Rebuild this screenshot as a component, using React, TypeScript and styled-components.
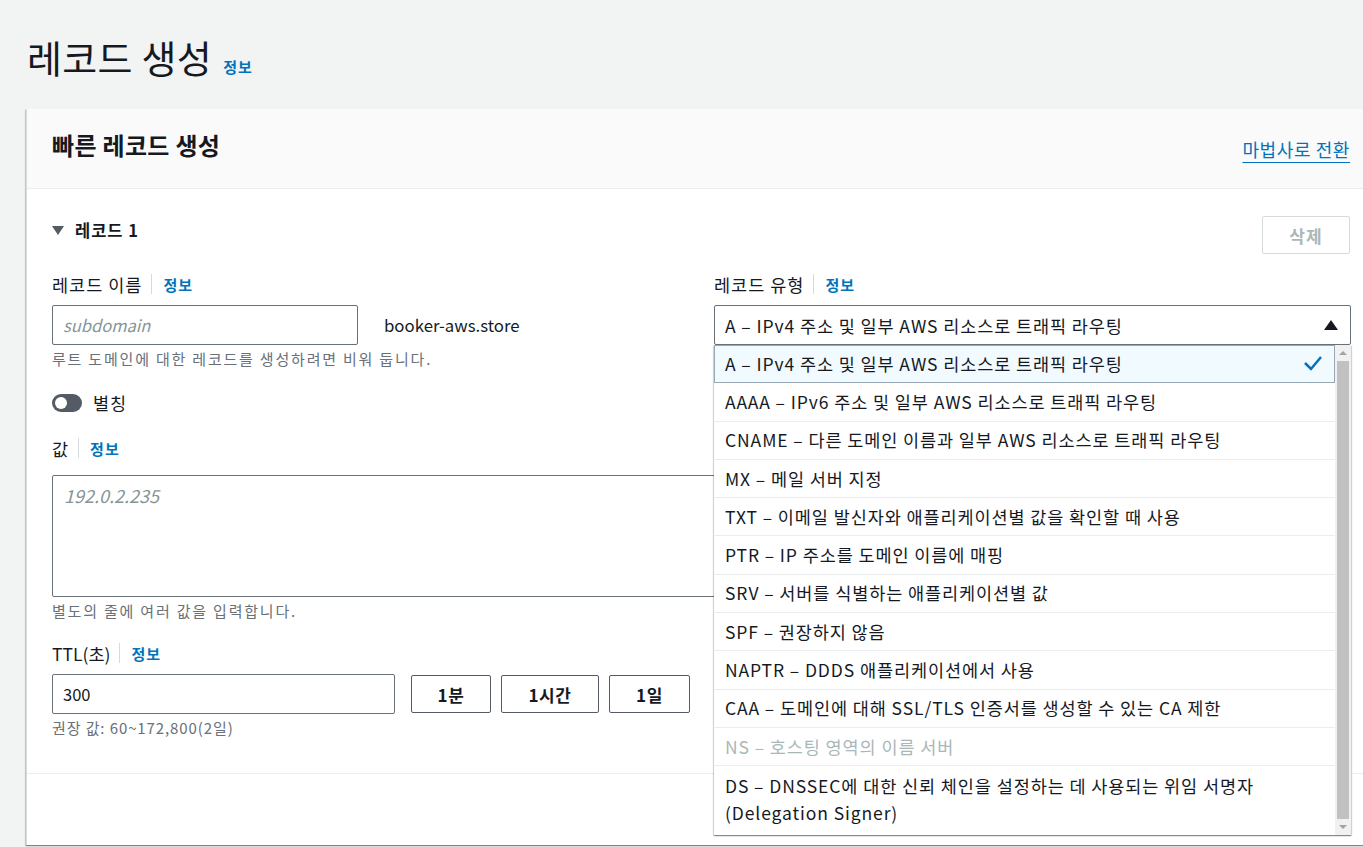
import React from "react";
import styled, { createGlobalStyle } from "styled-components";

const Global = createGlobalStyle`
  html, body { margin: 0; padding: 0; background: #f2f3f3; overflow: hidden; }
  body { font-family: "Noto Sans CJK KR", "Noto Sans", sans-serif; color: #16191f; }
  * { box-sizing: border-box; }
`;

const Page = styled.div`
  width: 1363px;
  height: 847px;
  padding: 26px 0 0 26px;
  overflow: hidden;
`;

const TitleRow = styled.div`
  display: flex;
  align-items: baseline;
  gap: 11px;
  height: 83px;
  padding-left: 1px;
`;

const Title = styled.h1`
  margin: 0;
  font-size: 38px;
  font-weight: 400;
  line-height: 62px;
  letter-spacing: 0.3px;
  color: #16191f;
`;

const InfoLink = styled.a`
  color: #0073bb;
  font-size: 15px;
  font-weight: 700;
  letter-spacing: 1px;
  text-decoration: none;
`;

const Card = styled.div`
  width: 1350px;
  background: #fff;
  border-left: 1px solid #d5dbdb;
  box-shadow: 0 1px 1px 0 rgba(0, 28, 36, 0.3), 1px 1px 1px 0 rgba(0, 28, 36, 0.15),
    -1px 1px 1px 0 rgba(0, 28, 36, 0.15);
  height: 736px;
`;

const CardHeader = styled.div`
  height: 80px;
  background: #fafafa;
  border-bottom: 1px solid #eaeded;
  display: flex;
  align-items: center;
  justify-content: space-between;
  padding: 0 26px 0 25px;
`;

const CardTitle = styled.h2`
  margin: 0;
  font-size: 24px;
  font-weight: 700;
  letter-spacing: 0.3px;
  position: relative;
  top: -4px;
`;

const SwitchLink = styled.a`
  color: #0073bb;
  font-size: 18px;
  letter-spacing: 0.6px;
  text-decoration: underline;
  text-underline-offset: 5px;
  text-decoration-thickness: 1px;
`;

const Section = styled.div`
  padding: 27px 26px 0 25px;
  border-bottom: 1px solid #eaeded;
  height: 585px;
`;

const SectionHead = styled.div`
  display: flex;
  justify-content: space-between;
  align-items: flex-start;
`;

const Expander = styled.div`
  display: flex;
  align-items: center;
  gap: 11px;
  font-weight: 700;
  font-size: 16.5px;
  letter-spacing: 1px;
  padding-top: 2px;
`;

const Caret = styled.span`
  width: 0;
  height: 0;
  border-left: 6px solid transparent;
  border-right: 6px solid transparent;
  border-top: 9px solid #545b64;
`;

const GhostButton = styled.button`
  width: 88px;
  height: 38px;
  border: 1px solid #d5dbdb;
  border-radius: 2px;
  background: #fff;
  color: #aab7b8;
  font-family: inherit;
  font-size: 17px;
  letter-spacing: 1px;
  font-weight: 700;
`;

const Grid = styled.div`
  display: grid;
  grid-template-columns: 642px 637px;
  column-gap: 20px;
  margin-top: 19px;
`;

const Field = styled.div<{ $span?: boolean; $top?: number }>`
  grid-column: ${(p) => (p.$span ? "1 / span 2" : "auto")};
  margin-top: ${(p) => p.$top ?? 0}px;
  position: relative;
`;

const Label = styled.div<{ $gap?: number }>`
  display: flex;
  align-items: center;
  height: 22px;
  font-size: 17.5px;
  letter-spacing: 1px;
  margin-bottom: ${(p) => p.$gap ?? 10}px;
`;

const LatinLabel = styled.span`
  letter-spacing: 0;
`;

const Divider = styled.span`
  width: 1px;
  height: 20px;
  background: #d5dbdb;
  margin: 0 11px 0 9px;
`;

const Row = styled.div`
  display: flex;
  align-items: center;
  gap: 16px;
`;

const TextInput = styled.div<{ $w: number; $italic?: boolean; $muted?: boolean }>`
  width: ${(p) => p.$w}px;
  height: 40px;
  border: 1px solid #687078;
  border-radius: 2px;
  padding: 0 10px;
  display: flex;
  align-items: center;
  font-size: 16.5px;
  font-style: ${(p) => (p.$italic ? "italic" : "normal")};
  color: ${(p) => (p.$muted ? "#879596" : "#16191f")};
`;

const Suffix = styled.span`
  font-size: 16.8px;
  margin-left: 10px;
`;

const Hint = styled.div<{ $ls?: number }>`
  font-size: 15px;
  letter-spacing: ${(p) => p.$ls ?? 1.8}px;
  color: #687078;
  margin-top: 4px;
  line-height: 20px;
`;

const ToggleRow = styled.div`
  display: flex;
  align-items: center;
  gap: 11px;
  font-size: 17.5px;
  letter-spacing: 1px;
  margin-top: 21px;
`;

const Toggle = styled.span`
  width: 30px;
  height: 18px;
  border-radius: 9px;
  background: #545b64;
  position: relative;
  &::after {
    content: "";
    position: absolute;
    left: 3px;
    top: 3px;
    width: 12px;
    height: 12px;
    border-radius: 50%;
    background: #fff;
  }
`;

const TextArea = styled.div`
  width: 100%;
  height: 122px;
  border: 1px solid #687078;
  border-radius: 2px;
  padding: 6px 11px;
  font-size: 18px;
  font-style: italic;
  color: #879596;
`;

const ChipButton = styled.button<{ $w: number }>`
  width: ${(p) => p.$w}px;
  height: 38px;
  border: 1px solid #545b64;
  border-radius: 2px;
  background: #fff;
  font-family: inherit;
  font-size: 17px;
  letter-spacing: 0.6px;
  font-weight: 700;
  color: #16191f;
`;

const Buttons = styled.div`
  display: flex;
  gap: 10px;
`;

const Select = styled.div`
  height: 40px;
  border: 1px solid #687078;
  border-radius: 2px;
  padding: 0 12px 0 10px;
  display: flex;
  align-items: center;
  justify-content: space-between;
  font-size: 17.5px;
  letter-spacing: 0.9px;
`;

const UpTriangle = styled.span`
  width: 0;
  height: 0;
  border-left: 7px solid transparent;
  border-right: 7px solid transparent;
  border-bottom: 10px solid #16191f;
`;

const Dropdown = styled.div`
  position: absolute;
  left: 0;
  right: 0;
  top: 72px;
  height: 490px;
  background: #fff;
  display: flex;
  box-shadow: 0 1px 1px 0 rgba(0, 28, 36, 0.3), 1px 1px 1px 0 rgba(0, 28, 36, 0.15),
    -1px 1px 1px 0 rgba(0, 28, 36, 0.15);
  z-index: 5;
`;

const OptionList = styled.div`
  flex: 1;
  display: flex;
  flex-direction: column;
`;

const Option = styled.div<{ $selected?: boolean; $disabled?: boolean; $tall?: boolean }>`
  min-height: ${(p) => (p.$tall ? 69 : 38.3)}px;
  padding: ${(p) => (p.$tall ? "0 11px 4px 10px" : "0 11px 2px 10px")};
  display: flex;
  align-items: center;
  justify-content: space-between;
  font-size: 17.5px;
  letter-spacing: 0.9px;
  line-height: 27px;
  white-space: pre-line;
  color: ${(p) => (p.$disabled ? "#aab7b8" : "#16191f")};
  background: ${(p) => (p.$selected ? "#f1faff" : "#fff")};
  border: 1px solid ${(p) => (p.$selected ? "#99a8b7" : "transparent")};
  border-bottom-color: ${(p) => (p.$selected ? "#99a8b7" : "#eaeded")};
  &:last-child { border-bottom-color: transparent; }
`;

const Scrollbar = styled.div`
  width: 16px;
  background: #f1f1f1;
  display: flex;
  flex-direction: column;
  align-items: center;
`;

const ScrollArrow = styled.span<{ $down?: boolean }>`
  width: 0;
  height: 0;
  margin: 6px 0;
  border-left: 4px solid transparent;
  border-right: 4px solid transparent;
  ${(p) =>
    p.$down ? "border-top: 4px solid #a3a3a3;" : "border-bottom: 4px solid #a3a3a3;"}
`;

const Thumb = styled.div`
  width: 12px;
  flex: 1;
  background: #c1c1c1;
`;

const options: { t: string; selected?: boolean; disabled?: boolean; tall?: boolean }[] = [
  { t: "A – IPv4 주소 및 일부 AWS 리소스로 트래픽 라우팅", selected: true },
  { t: "AAAA – IPv6 주소 및 일부 AWS 리소스로 트래픽 라우팅" },
  { t: "CNAME – 다른 도메인 이름과 일부 AWS 리소스로 트래픽 라우팅" },
  { t: "MX – 메일 서버 지정" },
  { t: "TXT – 이메일 발신자와 애플리케이션별 값을 확인할 때 사용" },
  { t: "PTR – IP 주소를 도메인 이름에 매핑" },
  { t: "SRV – 서버를 식별하는 애플리케이션별 값" },
  { t: "SPF – 권장하지 않음" },
  { t: "NAPTR – DDDS 애플리케이션에서 사용" },
  { t: "CAA – 도메인에 대해 SSL/TLS 인증서를 생성할 수 있는 CA 제한" },
  { t: "NS – 호스팅 영역의 이름 서버", disabled: true },
  { t: "DS – DNSSEC에 대한 신뢰 체인을 설정하는 데 사용되는 위임 서명자\n(Delegation Signer)", tall: true },
];

const Check = () => (
  <svg width="20" height="16" viewBox="0 0 20 16">
    <polyline points="2,8 8,14 18,2" fill="none" stroke="#0073bb" strokeWidth="2.5" />
  </svg>
);

export default function App() {
  return (
    <>
      <Global />
      <Page>
        <TitleRow>
          <Title>레코드 생성</Title>
          <InfoLink>정보</InfoLink>
        </TitleRow>
        <Card>
          <CardHeader>
            <CardTitle>빠른 레코드 생성</CardTitle>
            <SwitchLink>마법사로 전환</SwitchLink>
          </CardHeader>
          <Section>
            <SectionHead>
              <Expander>
                <Caret />
                레코드 1
              </Expander>
              <GhostButton>삭제</GhostButton>
            </SectionHead>
            <Grid>
              <Field>
                <Label>
                  레코드 이름<Divider />
                  <InfoLink>정보</InfoLink>
                </Label>
                <Row>
                  <TextInput $w={306} $italic $muted>subdomain</TextInput>
                  <Suffix>booker-aws.store</Suffix>
                </Row>
                <Hint>루트 도메인에 대한 레코드를 생성하려면 비워 둡니다.</Hint>
                <ToggleRow>
                  <Toggle />
                  별칭
                </ToggleRow>
              </Field>
              <Field>
                <Label>
                  레코드 유형<Divider />
                  <InfoLink>정보</InfoLink>
                </Label>
                <Select>
                  A – IPv4 주소 및 일부 AWS 리소스로 트래픽 라우팅
                  <UpTriangle />
                </Select>
                <Dropdown>
                  <OptionList>
                    {options.map((o) => (
                      <Option key={o.t} $selected={o.selected} $disabled={o.disabled} $tall={o.tall}>
                        <span>{o.t}</span>
                        {o.selected && <Check />}
                      </Option>
                    ))}
                  </OptionList>
                  <Scrollbar>
                    <ScrollArrow />
                    <Thumb />
                    <ScrollArrow $down />
                  </Scrollbar>
                </Dropdown>
              </Field>
              <Field $span $top={22}>
                <Label $gap={16}>
                  값<Divider />
                  <InfoLink>정보</InfoLink>
                </Label>
                <TextArea>192.0.2.235</TextArea>
                <Hint>별도의 줄에 여러 값을 입력합니다.</Hint>
              </Field>
              <Field $top={21}>
                <Label>
                  <LatinLabel>TTL(초)</LatinLabel>
                  <Divider />
                  <InfoLink>정보</InfoLink>
                </Label>
                <Row>
                  <TextInput $w={343}>300</TextInput>
                  <Buttons>
                    <ChipButton $w={80}>1분</ChipButton>
                    <ChipButton $w={98}>1시간</ChipButton>
                    <ChipButton $w={81}>1일</ChipButton>
                  </Buttons>
                </Row>
                <Hint $ls={0.9}>권장 값: 60~172,800(2일)</Hint>
              </Field>
            </Grid>
          </Section>
        </Card>
      </Page>
    </>
  );
}
